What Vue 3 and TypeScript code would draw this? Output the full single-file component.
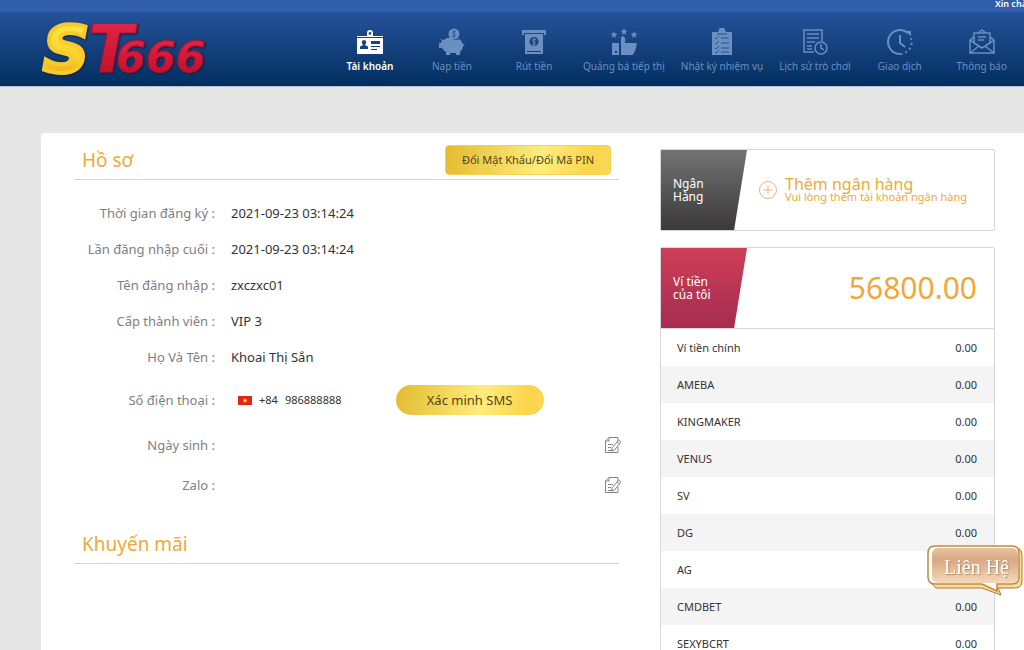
<script setup lang="ts">
import { ref } from 'vue'

interface NavItem {
  id: string
  label: string
}

interface Wallet {
  name: string
  amount: string
}

const navItems: NavItem[] = [
  { id: 'account', label: 'Tài khoản' },
  { id: 'deposit', label: 'Nạp tiền' },
  { id: 'withdraw', label: 'Rút tiền' },
  { id: 'promote', label: 'Quảng bá tiếp thị' },
  { id: 'tasks', label: 'Nhật ký nhiệm vụ' },
  { id: 'history', label: 'Lịch sử trò chơi' },
  { id: 'trade', label: 'Giao dịch' },
  { id: 'notice', label: 'Thông báo' },
]
const active = ref('account')

const details = [
  { label: 'Thời gian đăng ký :', value: '2021-09-23 03:14:24' },
  { label: 'Lần đăng nhập cuối :', value: '2021-09-23 03:14:24' },
  { label: 'Tên đăng nhập :', value: 'zxczxc01' },
  { label: 'Cấp thành viên :', value: 'VIP 3' },
  { label: 'Họ Và Tên :', value: 'Khoai Thị Sắn' },
]
const editable = ['Ngày sinh', 'Zalo']

const wallets: Wallet[] = ['Ví tiền chính', 'AMEBA', 'KINGMAKER', 'VENUS', 'SV', 'DG', 'AG', 'CMDBET', 'SEXYBCRT'].map(
  (name) => ({ name, amount: '0.00' }),
)
</script>

<template>
  <div class="page">
    <div class="strip"><span class="greeting">Xin chào</span></div>
    <header class="header">
      <a class="logo" href="#" aria-label="ST666">
        <svg width="170" height="60" viewBox="0 0 170 60">
          <defs>
            <linearGradient id="gold" x1="0" y1="0" x2="0" y2="1">
              <stop offset="0" stop-color="#ffec48" />
              <stop offset="0.6" stop-color="#fbd02c" />
              <stop offset="1" stop-color="#d99a12" />
            </linearGradient>
            <linearGradient id="crimson" x1="0" y1="0" x2="0" y2="1">
              <stop offset="0" stop-color="#e8294c" />
              <stop offset="1" stop-color="#b80c26" />
            </linearGradient>
          </defs>
          <g class="logo-text">
            <text x="48" y="54" font-size="66" fill="url(#crimson)" stroke="#b3122f">T</text>
            <text x="76" y="54" font-size="43" fill="url(#crimson)" stroke="#b3122f">666</text>
            <text x="3" y="54" font-size="64" fill="url(#gold)" stroke="#f7cb2d" stroke-width="4">S</text>
          </g>
        </svg>
      </a>
      <nav class="nav">
        <a
          v-for="item in navItems"
          :key="item.id"
          href="#"
          class="nav-item"
          :class="{ active: active === item.id }"
          @click.prevent="active = item.id"
        >
          <svg class="nav-icon" width="28" height="28" viewBox="0 0 28 28" fill="none" stroke="currentColor" stroke-width="1.5">
            <g v-if="item.id === 'account'" fill="currentColor" stroke="none">
              <path fill-rule="evenodd" d="M1 8h10V5a3 3 0 0 1 6 0v3h10v1H1zM14 4a1.4 1.4 0 1 0 0 2.8A1.4 1.4 0 0 0 14 4zM1 10h26v16H1zM8 12a2.3 2.3 0 0 0-1.3 4.2v1L4 18.500V21h8v-2.500l-2.700-1.300v-1A2.300 2.300 0 0 0 8 12zM15 13v3h9v-3zM15 18v1h9v-1zM15 21v1h6v-1z" />
            </g>
            <g v-else-if="item.id === 'deposit'" fill="currentColor" stroke="none">
              <circle cx="16" cy="6" r="5.500" />
              <path d="M2 11l4 1c2-2 5-3 8-2 2 3 5 2 7 1 3 2 3 4 4 5l2 1-2 1c0 3-2 5-3 6v3h-4v-2h-6v2H8v-3c-2-1-3-3-4-4H1v-5h2c0-1 1-2 1-2z" />
              <path d="M18 4c-3-2-5 1-2 2s1 4-2 2M16 2v8" fill="none" stroke="#315f99" stroke-width="1" />
            </g>
            <g v-else-if="item.id === 'withdraw'" fill="currentColor" stroke="none">
              <path d="M2 2h24v5h-2V5H4v2H2z" />
              <path fill-rule="evenodd" d="M5 6h18v20H5zM14 9a4.500 4.500 0 1 0 0 9 4.500 4.500 0 0 0 0-9zM7 23v1h14v-1z" />
              <path d="M16 12c-3-2-5 1-2 2s1 4-2 2M14 10v8" fill="none" stroke="currentColor" stroke-width="1" />
            </g>
            <g v-else-if="item.id === 'promote'" fill="currentColor" stroke="none">
              <path d="M14 0l1 2.500 2.500.2-2 1.700.6 2.600-2.100-1.400L11.900 7l.6-2.600-2-1.700 2.500-.2zM4 3l1 2.500 2.500.2-2 1.700.6 2.600L4 8.600 1.900 10l.6-2.600-2-1.700 2.500-.2zM24 3l1 2.500 2.500.2-2 1.700.6 2.600-2.100-1.400-2.100 1.400.6-2.600-2-1.700 2.500-.2z" />
              <path fill-rule="evenodd" d="M2 15h7v12H2zM5 23v2h2v-2z" />
              <path d="M11 16V9c3-2 5 0 4 6h10c3 0 2 3 1 3 1 2 0 3-1 3 1 2 0 3-1 3 0 2-1 3-3 3H11z" />
            </g>
            <g v-else-if="item.id === 'tasks'">
              <path d="M4 4h5c1 0 2-1 2-2a3 3 0 0 1 6 0c0 1 1 2 2 2h5v23H4z" fill="currentColor" stroke="none" />
              <path d="M9 6h10M13 10h8M13 15h8M13 20h8M13 24h8M7 10l1 1 3-3M7 15l1 1 3-3M7 20l1 1 3-3M7 24l1 1 3-3" stroke="#24518f" stroke-width="1" />
            </g>
            <g v-else-if="item.id === 'history'">
              <path d="M13 24H3V2h18v11M6 6h12M6 10h12M6 14h8M6 18h5M6 21h5" />
              <circle cx="20" cy="20" r="6" />
              <path d="M20 16v4l3 2" />
            </g>
            <g v-else-if="item.id === 'trade'">
              <path d="M22 5A12 12 0 1 0 14 26M14 7v8l5 4" stroke-width="2" />
              <path d="M25 10A12 12 0 0 1 14 26" stroke-width="2" stroke-dasharray="2 3" />
              <path d="M19 3h6v5z" fill="currentColor" stroke="none" />
            </g>
            <g v-else>
              <path d="M2 12l4-3V5h4l4-3 4 3h4v4l4 3v13H2zM6 9v6l8 5 8-5V9M2 25l9-7M26 25l-9-7M2 12l4 3M26 12l-4 3M6 5h16M10 9h8M10 12h6" />
            </g>
          </svg>
          <span>{{ item.label }}</span>
        </a>
      </nav>
    </header>

    <main class="card">
      <div class="left">
        <section>
          <div class="title-row">
            <h2>Hồ sơ</h2>
            <button type="button" class="gold-button pin">Đổi Mật Khẩu/Đổi Mã PIN</button>
          </div>
          <dl class="details">
            <div v-for="row in details" :key="row.label" class="detail">
              <dt>{{ row.label }}</dt>
              <dd>{{ row.value }}</dd>
            </div>
            <div class="detail phone">
              <dt>Số điện thoại :</dt>
              <dd>
                <svg class="flag" width="14" height="9" viewBox="0 0 14 9">
                  <rect width="14" height="9" fill="#e1251b" />
                  <path d="M7 2l.7 1.700 1.800.1-1.400 1.200.5 1.800L7 5.800 5.400 6.800l.5-1.800-1.400-1.200 1.800-.1z" fill="#ffe94a" />
                </svg>
                <span class="code">+84</span><span class="number">986888888</span>
                <button type="button" class="gold-button sms">Xác minh SMS</button>
              </dd>
            </div>
            <div v-for="name in editable" :key="name" class="detail edit-row">
              <dt>{{ name }} :</dt>
              <dd>
                <button type="button" class="edit" :aria-label="name">
                  <svg width="18" height="18" viewBox="0 0 18 18" fill="none" stroke="#858585">
                    <path d="M14 5V1.500H5L1.500 5v11.500H14V11M5 1.500V5H1.500M4 8.500h5M4 11.500h3M4 14.500h6" />
                    <path d="M8 12l6.500-8 2.500 2-6.500 8-3 1zM13 6l2.500 2" fill="#fff" />
                  </svg>
                </button>
              </dd>
            </div>
          </dl>
        </section>
        <section>
          <div class="title-row promo"><h2>Khuyến mãi</h2></div>
        </section>
      </div>

      <aside class="right">
        <section class="panel bank">
          <div class="panel-head">
            <h3 class="tag grey"><span>Ngân<br />Hàng</span></h3>
            <button type="button" class="add-bank">
              <svg width="20" height="20" viewBox="0 0 20 20" fill="none" stroke="#e9b183">
                <circle cx="10" cy="10" r="8.500" />
                <path d="M10 5.500v9M5.500 10h9" />
              </svg>
              <span class="add-text"><span class="add-title">Thêm ngân hàng</span><span class="add-hint">Vui lòng thêm tài khoản ngân hàng</span></span>
            </button>
          </div>
        </section>
        <section class="panel">
          <div class="panel-head wallet-head">
            <h3 class="tag red"><span>Ví tiền<br />của tôi</span></h3>
            <strong class="total">56800.00</strong>
          </div>
          <table class="wallets">
            <tbody>
              <tr v-for="wallet in wallets" :key="wallet.name">
                <th scope="row">{{ wallet.name }}</th>
                <td>{{ wallet.amount }}</td>
              </tr>
            </tbody>
          </table>
        </section>
      </aside>
    </main>

    <button type="button" class="contact">
      <svg width="96" height="52" viewBox="0 0 96 52">
        <defs>
          <linearGradient id="bubble" x1="0" y1="0" x2="0" y2="1">
            <stop offset="0" stop-color="#e6c2a4" />
            <stop offset="0.35" stop-color="#d9a982" />
            <stop offset="1" stop-color="#f3d9bb" />
          </linearGradient>
        </defs>
        <path d="M9 3h79q7 0 7 7v26q0 7-7 7H71l3 7-19-7H9l-7-7V9q0-6 7-6z" fill="#fbdc9a" stroke="#b0752f" />
        <path d="M8 1h77q7 0 7 7v24q0 7-7 7H70v7l-15-7H8q-7 0-7-7V8q0-7 7-7z" fill="#fff" stroke="#c08a3e" stroke-width="1.500" />
        <rect x="5" y="3" width="86" height="35" rx="6" fill="url(#bubble)" />
      </svg>
      <span>Liên Hệ</span>
    </button>
  </div>
</template>

<style>
body {
  margin: 0;
  background: #e6e6e6;
}
</style>

<style scoped>
* {
  box-sizing: border-box;
}

.page {
  min-height: 100vh;
  overflow-x: clip;
  background: #e6e6e6;
  color: #333;
  font-family: 'Noto Sans', 'Open Sans', sans-serif;
  font-size: 13px;
  line-height: 18px;
}

button {
  padding: 0;
  border: 0;
  background: none;
  font: inherit;
  color: inherit;
  cursor: pointer;
}

.strip {
  display: flex;
  justify-content: flex-end;
  height: 12px;
  background: #305eac;
  color: #fff;
  font-size: 9px;
  font-weight: 600;
  line-height: 8px;
}

.greeting {
  width: 29px;
  white-space: nowrap;
}

.header {
  display: flex;
  height: 75px;
  padding-left: 40px;
  background: linear-gradient(#25529a, #022f5f);
  border-bottom: 1px solid #a9c2da;
}

.logo {
  flex: none;
  width: 170px;
  padding-top: 6px;
}

.logo svg {
  display: block;
  overflow: visible;
}

.logo-text {
  font-family: 'DejaVu Sans', sans-serif;
  font-weight: 700;
  font-style: italic;
  filter: drop-shadow(1px 1px 1px #24183d);
}

.nav {
  display: flex;
  flex: none;
  margin-left: 119px;
}

.nav-item {
  display: flex;
  flex-direction: column;
  align-items: center;
  min-width: 82px;
  padding: 16px 8px 0;
  color: #6a8fc0;
  font-size: 10px;
  line-height: 14px;
  text-decoration: none;
  white-space: nowrap;
}

.nav-icon {
  margin-bottom: 3px;
}

.nav-item.active {
  color: #fff;
  font-weight: 600;
}

.card {
  display: grid;
  grid-template-columns: minmax(0, 1fr) 335px;
  column-gap: 41px;
  margin: 46px 0 0 41px;
  padding: 16px 29px 0 33px;
  background: #fff;
  border-radius: 4px 0 0 0;
}

.title-row {
  display: flex;
  justify-content: space-between;
  align-items: center;
  height: 31px;
  padding: 0 8px 8px;
  border-bottom: 1px solid #d3d3d3;
}

h2 {
  margin: 0;
  color: #efa939;
  font-size: 19px;
  font-weight: 400;
  line-height: 24px;
}

.gold-button {
  background: linear-gradient(100deg, #e3bb30, #ffed7d 58%, #fbd44a 88%, #f8d858);
  color: #55431a;
  text-align: center;
}

.pin {
  flex: none;
  width: 166px;
  height: 30px;
  border: 1px solid #f2d250;
  border-radius: 4px;
  font-size: 11px;
}

.details {
  margin: 15px 0 0;
}

.detail {
  display: flex;
  align-items: center;
  height: 36px;
}

dt {
  flex: none;
  width: 141px;
  color: #808080;
  text-align: right;
}

dd {
  display: flex;
  flex: 1;
  align-items: center;
  margin: 0 0 0 16px;
}

.phone {
  height: 50px;
}

.phone dd {
  padding-left: 7px;
  font-size: 11px;
}

.code {
  margin-left: 7px;
}

.number {
  margin-left: 7px;
}

.sms {
  width: 148px;
  height: 30px;
  margin-left: 54px;
  border-radius: 15px;
  font-size: 13px;
}

.edit-row {
  height: 40px;
}

.edit {
  display: flex;
  margin-left: auto;
  margin-right: -3px;
}

.promo {
  margin-top: 28px;
}

.panel {
  border: 1px solid #d6d6d6;
  border-radius: 2px;
}

.bank {
  margin-bottom: 16px;
}

.panel-head {
  display: flex;
  align-items: center;
  height: 80px;
}

.tag {
  display: flex;
  flex: none;
  align-items: center;
  width: 86px;
  height: 100%;
  margin: 0;
  padding-left: 12px;
  clip-path: polygon(0 0, 100% 0, 85% 100%, 0 100%);
  color: #fff;
  font-size: 12px;
  font-weight: 400;
  line-height: 13px;
}

.grey {
  background: linear-gradient(#737373, #3b3939);
}

.red {
  background: linear-gradient(#cf3e58, #a62c50);
}

.add-bank {
  display: flex;
  align-items: center;
  gap: 7px;
  margin-left: 11px;
  color: #efa939;
  text-align: left;
  white-space: nowrap;
}

.add-text {
  display: flex;
  flex-direction: column;
}

.add-title {
  font-size: 16px;
  line-height: 14px;
}

.add-hint {
  font-size: 11px;
  line-height: 12px;
}

.wallet-head {
  height: 81px;
  border-bottom: 1px solid #d6d6d6;
}

.total {
  margin-left: auto;
  padding-right: 17px;
  color: #efa939;
  font-size: 30px;
  font-weight: 400;
  line-height: 40px;
}

.wallets {
  width: 100%;
  border-collapse: collapse;
  font-size: 11px;
}

.wallets tr {
  height: 37px;
}

.wallets tr:nth-child(even) {
  background: #f4f4f4;
}

.wallets th {
  padding: 0 0 0 16px;
  font-weight: 400;
  text-align: left;
}

.wallets td {
  padding: 0 17px 0 0;
  text-align: right;
}

.contact {
  position: fixed;
  right: 1px;
  bottom: 53px;
  width: 96px;
  height: 52px;
}

.contact svg {
  display: block;
}

.contact span {
  position: absolute;
  inset: 10px 0 auto 3px;
  color: #fff;
  font-family: 'Liberation Serif', serif;
  font-size: 20px;
  line-height: 24px;
  text-align: center;
  text-shadow: 1px 1px 1px #b58a67;
}
</style>
